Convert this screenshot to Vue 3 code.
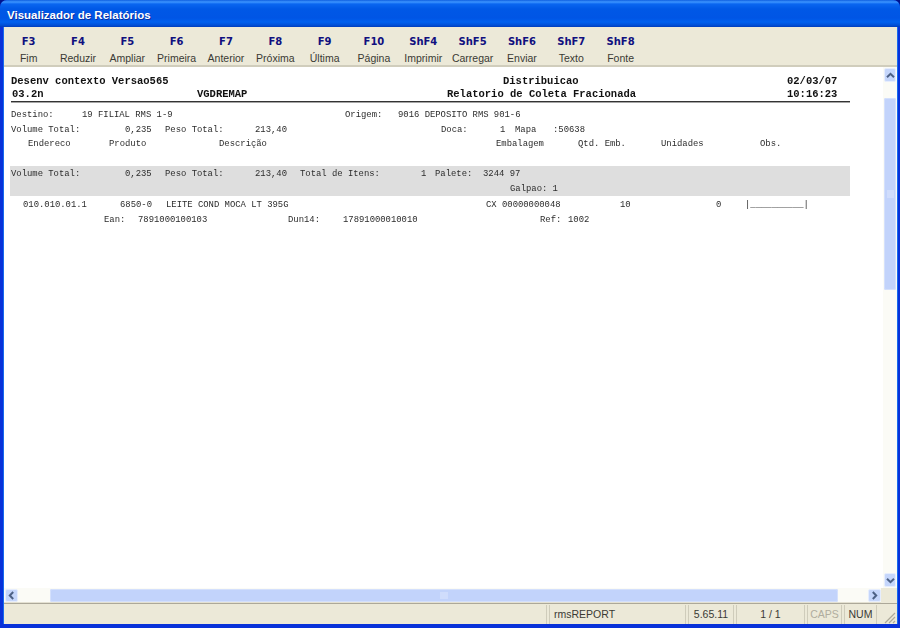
<script setup>
import { computed } from 'vue'

const keys = [
  ['F3', 'Fim'], ['F4', 'Reduzir'], ['F5', 'Ampliar'], ['F6', 'Primeira'], ['F7', 'Anterior'],
  ['F8', 'Próxima'], ['F9', 'Última'], ['F10', 'Página'], ['ShF4', 'Imprimir'], ['ShF5', 'Carregar'],
  ['ShF6', 'Enviar'], ['ShF7', 'Texto'], ['ShF8', 'Fonte']
]

const place = cells => {
  const out = []
  let prev = 4
  cells.forEach(([x, text]) => {
    if (out.length) out[out.length - 1].w = x - prev
    else out.push({ w: x - 4, text: '' })
    out.push({ w: 0, text })
    prev = x
  })
  return out
}

const head = computed(() => [
  [[11, 'Desenv contexto Versao565'], [503, 'Distribuicao'], [787, '02/03/07']],
  [[12, '03.2n'], [197, 'VGDREMAP'], [447, 'Relatorio de Coleta Fracionada'], [787, '10:16:23']]
].map(place))

const top = computed(() => [
  [[11, 'Destino:'], [82, '19 FILIAL RMS 1-9'], [345, 'Origem:'], [398, '9016 DEPOSITO RMS 901-6']],
  [[11, 'Volume Total:'], [125, '0,235'], [165, 'Peso Total:'], [255, '213,40'], [441, 'Doca:'], [500, '1'], [515, 'Mapa'], [553, ':50638']],
  [[28, 'Endereco'], [109, 'Produto'], [219, 'Descrição'], [496, 'Embalagem'], [578, 'Qtd. Emb.'], [661, 'Unidades'], [760, 'Obs.']]
].map(place))

const band = computed(() => [
  [[11, 'Volume Total:'], [125, '0,235'], [165, 'Peso Total:'], [255, '213,40'], [300, 'Total de Itens:'], [421, '1'], [435, 'Palete:'], [483, '3244 97']],
  [[510, 'Galpao: 1']]
].map(place))

const lines = computed(() => [
  [[23, '010.010.01.1'], [120, '6850-0'], [166, 'LEITE COND MOCA LT 395G'], [486, 'CX 00000000048'], [620, '10'], [716, '0'], [745, '|__________|']],
  [[104, 'Ean:'], [138, '7891000100103'], [288, 'Dun14:'], [343, '17891000010010'], [540, 'Ref:'], [568, '1002']]
].map(place))
</script>

<template>
  <div class="window">
    <header class="titlebar">Visualizador de Relatórios</header>
    <div class="frame">
      <nav class="toolbar">
        <div v-for="k in keys" :key="k[0]" class="tool">
          <b>{{ k[0] }}</b>
          <span>{{ k[1] }}</span>
        </div>
      </nav>

      <div class="viewer">
        <main class="report">
          <div class="head">
            <div v-for="(r, i) in head" :key="i" class="row">
              <span v-for="(c, j) in r" :key="j" class="cell" :style="c.w ? { width: c.w + 'px' } : null">{{ c.text }}</span>
            </div>
          </div>
          <div class="rule"></div>
          <div class="top">
            <div v-for="(r, i) in top" :key="i" class="row">
              <span v-for="(c, j) in r" :key="j" class="cell" :style="c.w ? { width: c.w + 'px' } : null">{{ c.text }}</span>
            </div>
          </div>
          <div class="band">
            <div v-for="(r, i) in band" :key="i" class="row">
              <span v-for="(c, j) in r" :key="j" class="cell" :style="c.w ? { width: c.w + 'px' } : null">{{ c.text }}</span>
            </div>
          </div>
          <div class="lines">
            <div v-for="(r, i) in lines" :key="i" class="row">
              <span v-for="(c, j) in r" :key="j" class="cell" :style="c.w ? { width: c.w + 'px' } : null">{{ c.text }}</span>
            </div>
          </div>
        </main>

        <aside class="vbar">
          <button class="arrow">
            <svg width="9" height="7" viewBox="0 0 9 7"><path d="M1 5.2 4.5 1.8 8 5.2" fill="none" stroke="#4d6185" stroke-width="2"/></svg>
          </button>
          <div class="vspace-a"></div>
          <div class="vthumb">
            <svg width="7" height="8" viewBox="0 0 7 8"><path d="M0 1h7M0 3h7M0 5h7M0 7h7" stroke="#dde6fd" stroke-width="1"/></svg>
          </div>
          <div class="vspace-b"></div>
          <button class="arrow">
            <svg width="9" height="7" viewBox="0 0 9 7"><path d="M1 1.8 4.5 5.2 8 1.8" fill="none" stroke="#4d6185" stroke-width="2"/></svg>
          </button>
        </aside>
      </div>

      <div class="hbar">
        <button class="arrow harrow">
          <svg width="7" height="9" viewBox="0 0 7 9"><path d="M5.2 1 1.8 4.5 5.2 8" fill="none" stroke="#4d6185" stroke-width="2"/></svg>
        </button>
        <div class="hspace-a"></div>
        <div class="hthumb">
          <svg width="8" height="7" viewBox="0 0 8 7"><path d="M1 0v7M3 0v7M5 0v7M7 0v7" stroke="#dde6fd" stroke-width="1"/></svg>
        </div>
        <div class="hspace-b"></div>
        <button class="arrow harrow">
          <svg width="7" height="9" viewBox="0 0 7 9"><path d="M1.8 1 5.2 4.5 1.8 8" fill="none" stroke="#4d6185" stroke-width="2"/></svg>
        </button>
        <div class="hcorner"></div>
      </div>

      <footer class="status">
        <div class="pane p0"></div>
        <div class="pane p1">rmsREPORT</div>
        <div class="pane p2">5.65.11</div>
        <div class="pane p3">1 / 1</div>
        <div class="pane p4">CAPS</div>
        <div class="pane p5">NUM</div>
        <svg class="grip" width="14" height="14" viewBox="0 0 14 14"><path d="M13 3 3 13M13 7 7 13M13 11l-2 2" stroke="#aca899" stroke-width="1.2" fill="none"/></svg>
      </footer>
    </div>
  </div>
</template>

<style>
html, body { margin: 0; background: #00138c; overflow: hidden; }
</style>

<style scoped>
.window {
  width: 900px;
  height: 628px;
  display: flex;
  flex-direction: column;
  overflow: hidden;
  border-radius: 7px 7px 0 0;
  background: #0831d9;
}
.titlebar {
  height: 27px;
  flex: none;
  box-sizing: border-box;
  padding: 0 0 0 7px;
  color: #fff;
  font: bold 11.5px/30px "Liberation Sans", sans-serif;
  text-shadow: 1px 1px 0 #0a2f9f;
  background: linear-gradient(#0f5fe0 0, #3d95ff 2px, #0a66f0 4px, #0058e6 9px, #0055e5 18px, #0060ee 22px, #0050d8 25px, #003dbb 27px);
}
.frame {
  flex: 1;
  min-height: 0;
  display: flex;
  flex-direction: column;
  margin: 0 3px 4px 4px;
  background: #ece9d8;
  box-shadow: -1px 0 0 #166aee, 1px 0 0 #166aee;
}
.toolbar {
  height: 40px;
  flex: none;
  display: flex;
  box-sizing: border-box;
  border-bottom: 2px solid #d0cdbc;
}
.tool {
  width: 49.33px;
  flex: none;
  display: flex;
  flex-direction: column;
  align-items: center;
  font-family: "Liberation Sans", Arial, sans-serif;
}
.tool b {
  margin-top: 7px;
  font: bold 10px/15px "DejaVu Sans", sans-serif;
  color: #10107f;
}
.tool span {
  margin-top: 3px;
  font-size: 10.5px;
  line-height: 13px;
  color: #3a3a34;
}
.viewer {
  flex: 1;
  min-height: 0;
  display: flex;
}
.report {
  flex: 1;
  min-width: 0;
  background: #fff;
  color: #2c2c2c;
  font: 8.9px/14px "Liberation Mono", "Courier New", monospace;
  overflow: hidden;
  filter: blur(0.25px);
}
.row {
  display: flex;
  height: 14px;
}
.cell {
  flex: none;
  white-space: pre;
}
.head {
  padding-top: 8px;
  font-weight: bold;
  font-size: 10.5px;
  color: #111;
}
.head .row { height: 13px; line-height: 13px; }
.rule {
  height: 1px;
  margin: 0 33px 0 7px;
  background: #333;
  box-shadow: 0 1px 0 #a5a5a5;
}
.top { margin-top: 6px; }
.top .row:first-child { height: 15px; }
.band {
  height: 30px;
  margin: 15px 33px 0 6px;
  background: #dedede;
  box-sizing: border-box;
}
.band .row { height: 15px; line-height: 16px; margin-left: -6px; }
.lines { margin-top: 2px; }
.lines .row:first-child { height: 15px; }
.vbar {
  width: 14px;
  flex: none;
  box-sizing: border-box;
  padding: 1px;
  display: flex;
  flex-direction: column;
  align-items: stretch;
  background: #fbfbf6;
}
.arrow {
  width: 12px;
  height: 14px;
  padding: 0;
  flex: none;
  display: flex;
  align-items: center;
  justify-content: center;
  border: 1px solid #e6edfd;
  border-radius: 2px;
  background: #c5d6fb;
}
.vspace-a { height: 16px; flex: none; }
.vthumb {
  height: 192px;
  flex: none;
  display: flex;
  align-items: center;
  justify-content: center;
  border-radius: 2px;
  background: #c2d3fb;
  box-shadow: inset 0 0 0 1px #d4e0fc;
}
.vspace-b { flex: 1; }
.hbar {
  height: 15px;
  flex: none;
  display: flex;
  align-items: center;
  box-sizing: border-box;
  padding: 0 0 0 1px;
  background: #fbfbf6;
  border-bottom: 1px solid #e4e1d2;
}
.harrow { height: 13px; width: 13px; }
.hspace-a { width: 32px; flex: none; }
.hthumb {
  width: 788px;
  height: 13px;
  flex: none;
  display: flex;
  align-items: center;
  justify-content: center;
  border-radius: 2px;
  background: #c2d3fb;
  box-shadow: inset 0 0 0 1px #d4e0fc;
}
.hspace-b { flex: 1; }
.hcorner {
  width: 16px;
  height: 15px;
  flex: none;
  background: #ece9d8;
}
.status {
  height: 21px;
  flex: none;
  display: flex;
  box-sizing: border-box;
  border-top: 1px solid #aca899;
  padding-top: 1px;
  font: 10.5px/19px "Liberation Sans", Arial, sans-serif;
  color: #3a3a34;
  position: relative;
}
.pane {
  box-sizing: border-box;
  flex: none;
  border-left: 1px solid #cfccbb;
  border-right: 1px solid #cfccbb;
  margin-right: 2px;
  white-space: nowrap;
}
.p0 { width: 543px; border-left: 0; }
.p1 { width: 137px; padding-left: 4px; }
.p2 { width: 46px; text-align: center; }
.p3 { width: 69px; text-align: center; }
.p4 { width: 35px; text-align: center; color: #b0ad9e; }
.p5 { width: 33px; text-align: center; }
.grip { position: absolute; right: 1px; bottom: 0; }
</style>
